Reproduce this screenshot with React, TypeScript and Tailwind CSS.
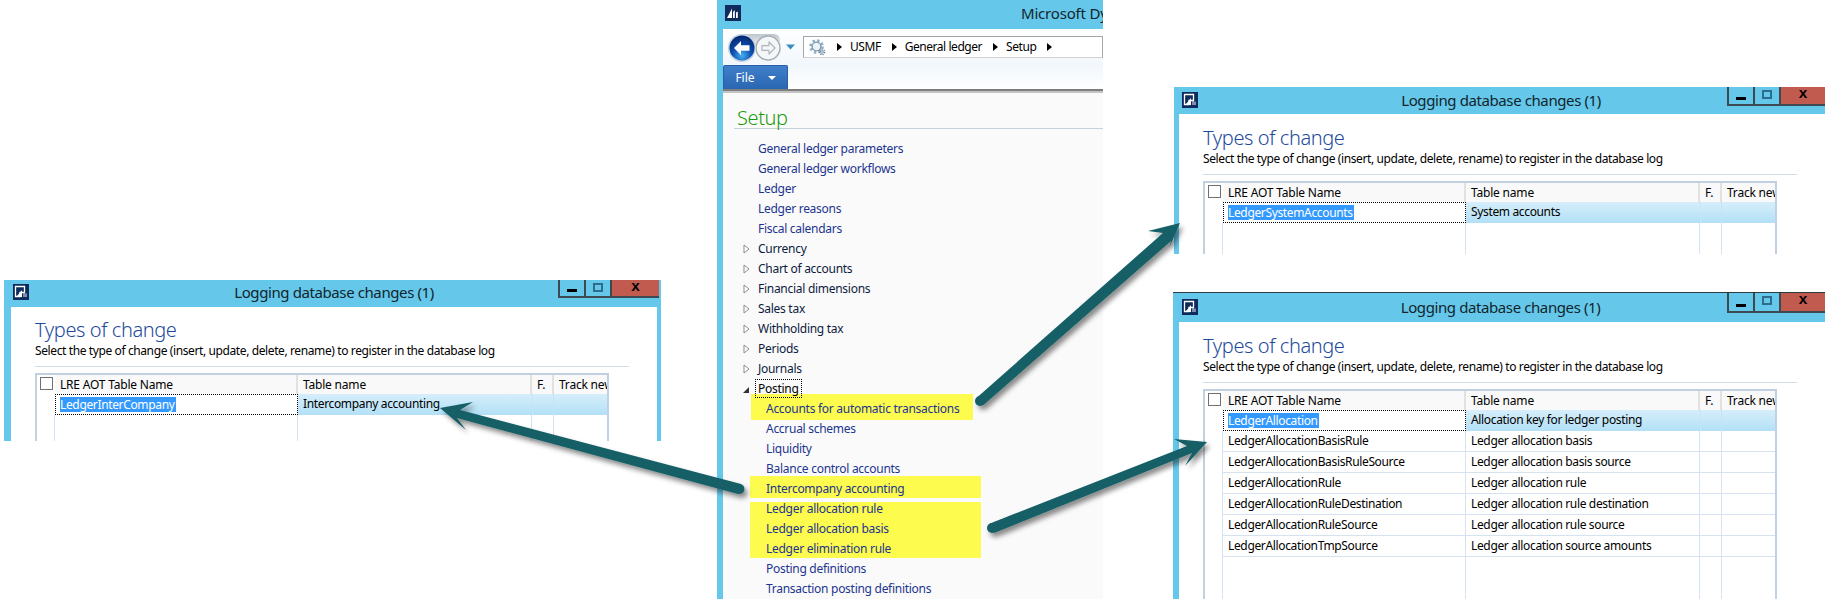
import React from "react";

const FONT = "[font-family:'Noto_Sans','Open_Sans',sans-serif]";

function AxIcon() {
  return (
    <svg width="16" height="16" viewBox="0 0 16 16" className="shrink-0">
      <rect width="16" height="16" fill="#0f2a5c" />
      <path d="M2.5 2.5h9v6H7v4H2.5z" fill="none" stroke="#fff" strokeWidth="1.3" />
      <path d="M4 12l5-6v7H4z" fill="#fff" />
      <path d="M11 8.5V13M13 9.5V13" stroke="#c9d3e6" strokeWidth="1.2" />
    </svg>
  );
}

function WindowButtons({ className }: { className: string }) {
  return (
    <div className={`absolute top-0 flex border-b-2 border-l-2 border-[#3c4a50] ${className}`}>
      <div className="flex w-[26px] items-end justify-center border-r-2 border-[#3c4a50] pb-[4px]">
        <div className="h-[3px] w-[10px] bg-black" />
      </div>
      <div className="flex w-[26px] items-start justify-center border-r-2 border-[#3c4a50] pt-[3px]">
        <div className="h-[9px] w-[10px] border-2 border-[#2c6c8c]" />
      </div>
      <div className="flex flex-1 items-start justify-center bg-[#c25b4f] [font-family:'Liberation_Mono',monospace] text-[15px] leading-[16px] font-bold text-black">
        x
      </div>
    </div>
  );
}

const COLS = "grid grid-cols-[18px_243px_234px_22px_1fr]";

type Row = [string, string];

function DataGrid({ rows }: { rows: Row[] }) {
  return (
    <div className="flex min-h-0 w-[574px] flex-1 flex-col overflow-hidden border-x-2 border-t-2 border-[#c0d0e0]">
      <div className={`${COLS} h-[19px] shrink-0 text-[12px] leading-[20px] tracking-[-0.2px] text-black`}>
        <div className="flex items-start justify-center pt-[2px]">
          <div className="h-[13px] w-[13px] border border-[#707070] bg-white" />
        </div>
        <div className="border-r-2 border-[#e2e2e2] bg-[#f9f9f9] pl-[5px]">LRE AOT Table Name</div>
        <div className="border-r-2 border-[#e2e2e2] bg-[#f9f9f9] pl-[5px]">Table name</div>
        <div className="border-r-2 border-[#e2e2e2] bg-[#f9f9f9] pl-[5px]">F.</div>
        <div className="overflow-hidden bg-[#f9f9f9] pl-[5px] whitespace-nowrap">Track new</div>
      </div>
      {rows.map(([name, label], i) =>
        i === 0 ? (
          <div key={name} className={`${COLS} h-[21px] shrink-0 text-[12px] leading-[19px] tracking-[-0.35px] text-black`}>
            <div />
            <div className="border border-dotted border-black bg-white pl-[4px]">
              <span className="inline-block bg-[#3399ff] pr-[1px] leading-[15px] text-white">{name}</span>
            </div>
            <div className="bg-gradient-to-b from-[#d6eefb] to-[#b2e0f6] pl-[5px]">{label}</div>
            <div className="border-x border-[#c8e4f4] bg-gradient-to-b from-[#d6eefb] to-[#b2e0f6]" />
            <div className="bg-gradient-to-b from-[#d6eefb] to-[#b2e0f6]" />
          </div>
        ) : (
          <div key={name} className={`${COLS} h-[21px] shrink-0 text-[12px] leading-[20px] tracking-[-0.35px] text-black`}>
            <div className="border-r border-[#d5e3f0]" />
            <div className="border-r border-b border-[#d5e3f0] pl-[5px]">{name}</div>
            <div className="border-r border-b border-[#d5e3f0] pl-[5px]">{label}</div>
            <div className="border-r border-b border-[#d5e3f0]" />
            <div className="border-b border-[#d5e3f0]" />
          </div>
        )
      )}
      <div className={`${COLS} flex-1`}>
        <div className="border-r border-[#d5e3f0]" />
        <div className="border-r border-[#d5e3f0]" />
        <div className="border-r border-[#d5e3f0]" />
        <div className="border-r border-[#d5e3f0]" />
        <div />
      </div>
    </div>
  );
}

function LogWindow({
  className,
  contentClass,
  titleClass,
  buttonsClass,
  rows,
}: {
  className: string;
  contentClass: string;
  titleClass: string;
  buttonsClass: string;
  rows: Row[];
}) {
  return (
    <section className={`absolute flex flex-col overflow-hidden bg-[#65c8ea] ${className}`}>
      <header className={`relative flex shrink-0 items-center ${titleClass}`}>
        <AxIcon />
        <h2 className="absolute inset-x-0 pl-[3px] text-center text-[15px] leading-5 font-normal tracking-[-0.4px] text-[#12252c]">
          Logging database changes (1)
        </h2>
        <WindowButtons className={buttonsClass} />
      </header>
      <div className={`flex min-h-0 flex-1 flex-col bg-white ${contentClass}`}>
        <h3 className="h-[26px] shrink-0 text-[20px] leading-[26px] font-light tracking-[-0.4px] text-[#1d4a9c]">Types of change</h3>
        <p className="h-[16px] shrink-0 text-[12px] leading-[16px] tracking-[-0.39px] text-black">
          Select the type of change (insert, update, delete, rename) to register in the database log
        </p>
        <div className="mt-[7px] h-[1px] w-[594px] shrink-0 bg-[#d4dde4]" />
        <div className="h-[6px] shrink-0" />
        <DataGrid rows={rows} />
      </div>
    </section>
  );
}

type NavItem = { label: string; kind: "link" | "branch" | "open" | "child"; hl?: string };

const NAV: NavItem[] = [
  { label: "General ledger parameters", kind: "link" },
  { label: "General ledger workflows", kind: "link" },
  { label: "Ledger", kind: "link" },
  { label: "Ledger reasons", kind: "link" },
  { label: "Fiscal calendars", kind: "link" },
  { label: "Currency", kind: "branch" },
  { label: "Chart of accounts", kind: "branch" },
  { label: "Financial dimensions", kind: "branch" },
  { label: "Sales tax", kind: "branch" },
  { label: "Withholding tax", kind: "branch" },
  { label: "Periods", kind: "branch" },
  { label: "Journals", kind: "branch" },
  { label: "Posting", kind: "open" },
  {
    label: "Accounts for automatic transactions",
    kind: "child",
    hl: "left-[-15px] top-[-5px] h-[26px] w-[222px]",
  },
  { label: "Accrual schemes", kind: "child" },
  { label: "Liquidity", kind: "child" },
  { label: "Balance control accounts", kind: "child" },
  {
    label: "Intercompany accounting",
    kind: "child",
    hl: "left-[-16px] top-[-3px] h-[22px] w-[231px]",
  },
  {
    label: "Ledger allocation rule",
    kind: "child",
    hl: "left-[-16px] top-[3px] h-[56px] w-[231px]",
  },
  { label: "Ledger allocation basis", kind: "child" },
  { label: "Ledger elimination rule", kind: "child" },
  { label: "Posting definitions", kind: "child" },
  { label: "Transaction posting definitions", kind: "child" },
];

function Tri() {
  return <span className="ml-[3px] inline-block h-0 w-0 shrink-0 border-y-[4px] border-l-[5px] border-y-transparent border-l-black" />;
}

function GearIcon() {
  return (
    <svg width="17" height="17" viewBox="0 0 17 17" className="shrink-0">
      <circle cx="7.5" cy="7.5" r="6" fill="none" stroke="#8fb0c8" strokeWidth="2.6" strokeDasharray="2.4 2.3" />
      <circle cx="7.5" cy="7.5" r="4.4" fill="#eef4f8" stroke="#7b9ab2" strokeWidth="1.4" />
      <circle cx="13" cy="13" r="2.6" fill="none" stroke="#7b8f9f" strokeWidth="1.6" strokeDasharray="1.3 1" />
      <circle cx="13" cy="13" r="1.4" fill="#dfe7ed" stroke="#6f8596" strokeWidth="0.7" />
    </svg>
  );
}

function NavButtons() {
  return (
    <svg width="78" height="32" viewBox="0 0 78 32" className="shrink-0">
      <defs>
        <radialGradient id="bk" cx="50%" cy="80%" r="75%">
          <stop offset="0%" stopColor="#46b0f2" />
          <stop offset="50%" stopColor="#0d4fb0" />
          <stop offset="100%" stopColor="#062a72" />
        </radialGradient>
        <linearGradient id="pill" x1="0" y1="0" x2="0" y2="1">
          <stop offset="0%" stopColor="#bfc6cd" />
          <stop offset="100%" stopColor="#eef1f4" />
        </linearGradient>
      </defs>
      <rect x="12" y="3" width="44" height="12" rx="6" fill="url(#pill)" />
      <circle cx="44" cy="17" r="12" fill="#f5f6f7" stroke="#a8aeb4" strokeWidth="1.5" />
      <path d="M51 17l-6-6v3.6h-7v4.8h7V23z" fill="#f5f6f7" stroke="#b0b5ba" strokeWidth="1.2" strokeLinejoin="round" />
      <circle cx="18" cy="17" r="14" fill="#c7d3df" />
      <circle cx="18" cy="17" r="12.5" fill="url(#bk)" />
      <path d="M10 17l7-7v4.3h8.5v5.4H17V24z" fill="#fff" />
      <path d="M62 13.5h9l-4.5 5z" fill="#3a8fc0" />
    </svg>
  );
}

function MainWindow() {
  return (
    <section className="absolute top-0 left-[717px] flex h-[599px] w-[386px] flex-col overflow-hidden bg-[#65c8ea] pl-[6px]">
      <header className="relative -ml-[6px] flex h-[29px] shrink-0 items-center pb-[3px] pl-[8px]">
        <svg width="16" height="16" viewBox="0 0 16 16" className="shrink-0">
          <rect width="16" height="16" fill="#0f2a5c" />
          <path d="M2 13L7 3.5V13zM8 13V7l1.8-2V13zM11 13V7.5l1.8-1V13z" fill="#fff" />
        </svg>
        <span className="absolute left-[304px] text-[15px] leading-5 tracking-[-0.2px] whitespace-nowrap text-[#12252c]">Microsoft Dynamics AX</span>
      </header>
      <div className="flex h-[36px] shrink-0 items-center bg-gradient-to-b from-[#ffffff] to-[#f1f7fc] pl-[1px]">
        <NavButtons />
        <div className="ml-[1px] flex h-[22px] flex-1 items-center gap-[8px] border border-[#a6a6a6] border-b-[#d0d0d0] bg-white pl-[5px] text-[12px] leading-5 tracking-[-0.45px] whitespace-nowrap text-black">
          <GearIcon />
          <Tri />
          <span>USMF</span>
          <Tri />
          <span>General ledger</span>
          <Tri />
          <span>Setup</span>
          <Tri />
        </div>
      </div>
      <div className="flex h-[24px] shrink-0 bg-gradient-to-b from-[#f1f7fc] to-[#ffffff]">
        <div className="flex w-[65px] items-center justify-center gap-[13px] rounded-t-[2px] border border-b-0 border-[#2a5fa5] bg-gradient-to-b from-[#3f7fca] to-[#2a66b2] text-[12px] leading-4 text-white">
          <span>File</span>
          <span className="inline-block h-0 w-0 border-x-[4px] border-t-[4px] border-x-transparent border-t-white" />
        </div>
      </div>
      <div className="h-[4px] shrink-0 border-t-2 border-[#7d7d7d] bg-[#c4c4c4]" />
      <div className="flex min-h-0 flex-1 flex-col bg-[#fafafa] pl-[11px]">
        <h2 className="mt-[9px] h-[27px] border-b border-[#c3d2dd] pt-[6px] pl-[3px] text-[20px] leading-[20px] font-light tracking-[-0.4px] text-[#1e9a10]">Setup</h2>
        <ul className="pt-[10px] text-[12px] leading-5 tracking-[-0.28px]">
          {NAV.map((n) => {
            const isChild = n.kind === "child";
            const isLink = n.kind === "link" || isChild;
            return (
              <li key={n.label} className={`relative h-5 whitespace-nowrap ${isChild ? "ml-[32px]" : "ml-[24px]"}`}>
                {n.hl && <span className={`absolute bg-[#fdfb4d] ${n.hl}`} />}
                {n.kind === "branch" && (
                  <svg width="7" height="10" viewBox="0 0 7 10" className="absolute top-[5px] left-[-15px]">
                    <path d="M1 1l5 4-5 4z" fill="#fff" stroke="#8b8b8b" strokeWidth="1" />
                  </svg>
                )}
                {n.kind === "open" && (
                  <span className="absolute top-[8px] left-[-15px] h-0 w-0 border-b-[6px] border-l-[6px] border-b-[#333] border-l-transparent" />
                )}
                {n.kind === "open" ? (
                  <span className="relative z-10 -ml-[3px] inline-block h-[19px] border border-dotted border-black px-[2px] leading-[18px] text-black">{n.label}</span>
                ) : (
                  <span className={`relative z-10 ${isLink ? "text-[#1c3590]" : "text-[#0d1a40]"}`}>{n.label}</span>
                )}
              </li>
            );
          })}
        </ul>
      </div>
    </section>
  );
}

function Arrows() {
  return (
    <svg className="pointer-events-none absolute inset-0 z-20" width="1825" height="599" viewBox="0 0 1825 599">
      <defs>
        <filter id="sh" x="-10%" y="-10%" width="120%" height="130%">
          <feDropShadow dx="3" dy="4" stdDeviation="2.5" floodColor="#000" floodOpacity="0.45" />
        </filter>
      </defs>
      <g filter="url(#sh)" fill="#135f66">
        <path d="M741 484L460 410L473 402L440 408L466 430L457 418L738 494Z" />
        <circle cx="739.5" cy="489" r="5" />
        <path d="M977 397.5L1163 233L1148 231L1180 223L1169 248L1171 241L983.5 405Z" />
        <circle cx="980" cy="401" r="5" />
        <path d="M990 523.5L1187 446L1174 439L1207 442L1185 466L1192 453L994 533Z" />
        <circle cx="992" cy="528" r="5" />
      </g>
    </svg>
  );
}

const BOTTOM_ROWS: Row[] = [
  ["LedgerAllocation", "Allocation key for ledger posting"],
  ["LedgerAllocationBasisRule", "Ledger allocation basis"],
  ["LedgerAllocationBasisRuleSource", "Ledger allocation basis source"],
  ["LedgerAllocationRule", "Ledger allocation rule"],
  ["LedgerAllocationRuleDestination", "Ledger allocation rule destination"],
  ["LedgerAllocationRuleSource", "Ledger allocation rule source"],
  ["LedgerAllocationTmpSource", "Ledger allocation source amounts"],
];

export default function App() {
  return (
    <main className={`relative h-[599px] w-[1825px] overflow-hidden bg-white ${FONT}`}>
      <LogWindow
        className="top-[280px] left-[4px] h-[161px] w-[657px]"
        titleClass="h-[27px] pl-[9px] pb-[4px]"
        buttonsClass="right-[2px] h-[18px] w-[101px]"
        contentClass="ml-[7px] mr-[4px] pl-[24px] pt-[10px]"
        rows={[["LedgerInterCompany", "Intercompany accounting"]]}
      />
      <LogWindow
        className="top-[87px] left-[1174px] h-[167px] w-[651px]"
        titleClass="h-[27px] pl-[8px] pb-[2px]"
        buttonsClass="right-0 h-[19px] w-[98px]"
        contentClass="ml-[5px] pl-[24px] pt-[11px]"
        rows={[["LedgerSystemAccounts", "System accounts"]]}
      />
      <LogWindow
        className="top-[292px] left-[1173px] h-[307px] w-[652px] border-t border-[#2b3a40]"
        titleClass="h-[29px] pl-[9px] pb-[2px]"
        buttonsClass="right-0 h-[20px] w-[98px]"
        contentClass="ml-[6px] pl-[24px] pt-[11px]"
        rows={BOTTOM_ROWS}
      />
      <MainWindow />
      <Arrows />
    </main>
  );
}
